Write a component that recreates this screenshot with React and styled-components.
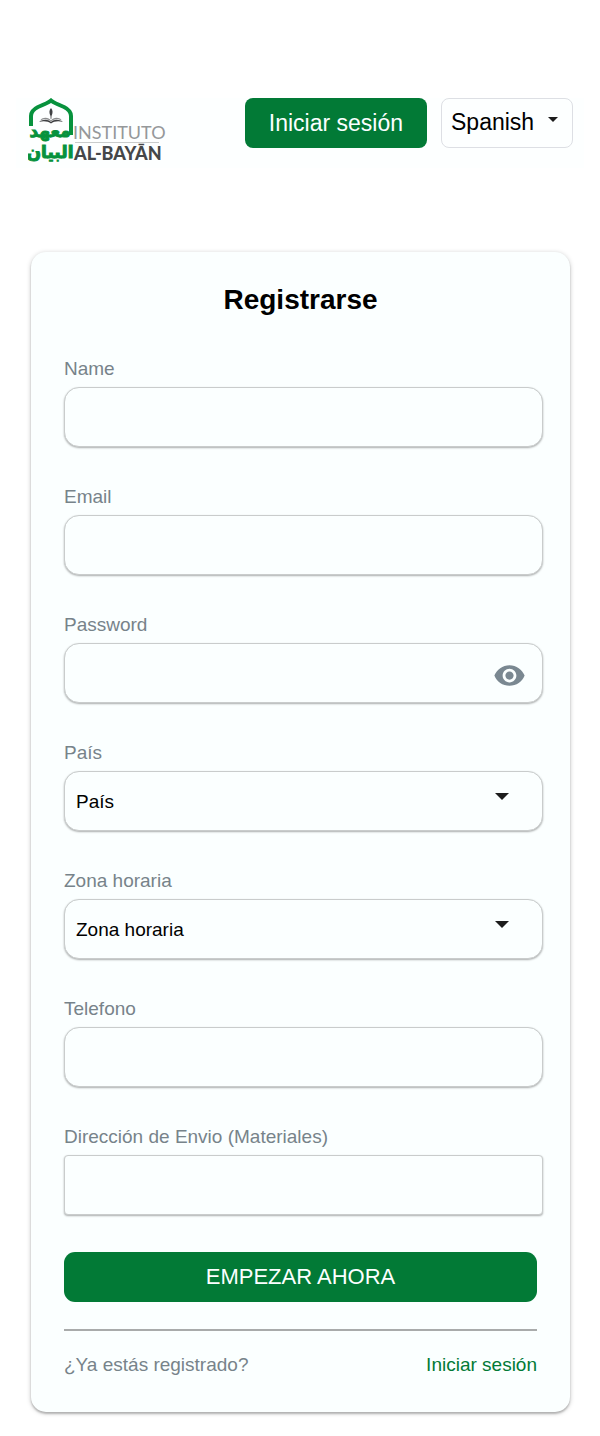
import React, { useState } from "react";
import styled, { createGlobalStyle } from "styled-components";
import { MdVisibility } from "react-icons/md";

const GREEN = "#027a36";
const GREY = "#77838a";
const TINT = "#fbffff";

const GlobalStyle = createGlobalStyle`
  *, *::before, *::after { box-sizing: border-box; }
  body {
    margin: 0;
    background: #fff;
    color: #000;
    font-family: "Liberation Sans", Arial, sans-serif;
    font-size: 19px;
    line-height: 24px;
  }
  button, input, select { font: inherit; color: inherit; margin: 0; }
`;

const Page = styled.div`
  margin: 0 16px;
  padding: 98px 0 24px;
`;

const Header = styled.header`
  display: flex;
  align-items: flex-start;
  justify-content: space-between;
  padding: 0 11px 0 12px;
  margin-bottom: 84px;
  background: #fdffff;
`;

const LogoLink = styled.a`
  display: block;
  text-decoration: none;
`;

const LogoDrawing = styled.svg`
  display: block;
  width: 140px;
  height: 70px;
`;

const Actions = styled.div`
  display: flex;
  gap: 14px;
`;

const LoginButton = styled.button`
  height: 50px;
  padding: 0 24px;
  border: 0;
  border-radius: 8px;
  background: ${GREEN};
  color: ${TINT};
  font-size: 23px;
  white-space: nowrap;
  cursor: pointer;
`;

const SelectWrap = styled.div`
  position: relative;
`;

const Caret = styled.svg`
  position: absolute;
  top: ${(p) => p.$top}px;
  right: ${(p) => p.$right}px;
  width: ${(p) => p.$size}px;
  height: 7px;
  fill: #1c1c1c;
  pointer-events: none;
`;

const LanguageSelect = styled.select`
  appearance: none;
  display: block;
  width: 132px;
  height: 50px;
  padding: 0 9px 2px;
  border: 1px solid #dddfe4;
  border-radius: 8px;
  background: #fdffff;
  font-size: 23px;
`;

const Card = styled.main`
  margin: 0 14px 0 15px;
  padding: 32px 33px 35px;
  border-radius: 15px;
  background: ${TINT};
  box-shadow: 0 1px 5px rgba(0, 0, 0, 0.22), 0 2px 2px rgba(0, 0, 0, 0.2);
`;

const Title = styled.h1`
  margin: 0 0 41px;
  font-size: 28px;
  line-height: 32px;
  font-weight: 700;
  text-align: center;
`;

const Form = styled.form`
  display: flex;
  flex-direction: column;
`;

const Fields = styled.div`
  display: flex;
  flex-direction: column;
  gap: 38px;
  margin: 0 -6px 37px 0;
`;

const Field = styled.div`
  display: flex;
  flex-direction: column;
  gap: 6px;
`;

const Label = styled.label`
  color: ${GREY};
`;

const Control = styled.input`
  appearance: none;
  display: block;
  width: 100%;
  height: 60px;
  padding: 2px 11px 0;
  border: 1px solid #c9cccc;
  border-radius: ${(p) => (p.$square ? 4 : 15)}px;
  background: ${TINT};
  box-shadow: 0 1px 2px rgba(0, 0, 0, 0.32);
`;

const EyeButton = styled.button`
  position: absolute;
  top: 16px;
  right: 17px;
  display: flex;
  padding: 0;
  border: 0;
  background: none;
  color: #7a8891;
  font-size: 33px;
  cursor: pointer;
`;

const SubmitButton = styled.button`
  height: 50px;
  border: 0;
  border-radius: 11px;
  background: ${GREEN};
  color: ${TINT};
  font-size: 22px;
  cursor: pointer;
`;

const Divider = styled.hr`
  width: 100%;
  height: 2px;
  margin: 27px 0 22px;
  border: 0;
  background: #a9abab;
`;

const CardFooter = styled.div`
  display: flex;
  justify-content: space-between;
  color: ${GREY};
`;

const FooterLink = styled.a`
  color: ${GREEN};
  text-decoration: none;
`;

function Logo() {
  return (
    <LogoDrawing viewBox="0 0 140 70" role="img" aria-label="Instituto Al-Bayān">
      <g fill="none" stroke="#07923d" strokeWidth="4">
        <path d="M3 28V18C3 13 6 11 10 9C15 7 20 5 23 2.500C26 5 31 7 36 9C40 11 43 13 43 18V37" />
      </g>
      <g fill="#3f4143">
        <path d="M23 10C25 12 25 15 23.500 18L23.300 21H22.700L22.500 18C21 15 21 12 23 10Z" />
        <path d="M11 24C15 21 20 21 23 24C26 21 31 21 35 24C31 22.700 26 23 23 25.500C20 23 15 22.700 11 24Z" />
        <path d="M14 20.500C18 19 21 20 23 22.500C25 20 28 19 32 20.500L34 22.500C29 20.500 26 21 23 23.700C20 21 17 20.500 12 22.500Z" opacity=".6" />
      </g>
      <g
        fill="#07923d"
        stroke="#07923d"
        strokeWidth="1"
        fontFamily="'DejaVu Sans', sans-serif"
        fontWeight="700"
        textAnchor="middle"
        direction="rtl"
      >
        <text x="22" y="39" fontSize="17">معهد</text>
        <text x="22" y="60" fontSize="17">البيان</text>
      </g>
      <path d="M47 44.500H131" stroke="#c9cccc" />
      <g fontFamily="Lato, sans-serif">
        <text x="45" y="41" fontSize="18" fontWeight="400" fill="#95989a">INSTITUTO</text>
        <text x="46" y="62" fontSize="18" fontWeight="900" fill="#454749">AL-BAYĀN</text>
      </g>
    </LogoDrawing>
  );
}

function TextField({ id, label, ...rest }) {
  return (
    <Field>
      <Label htmlFor={id}>{label}</Label>
      <Control id={id} name={id} {...rest} />
    </Field>
  );
}

function PasswordField() {
  const [visible, setVisible] = useState(false);
  return (
    <Field>
      <Label htmlFor="password">Password</Label>
      <SelectWrap>
        <Control id="password" name="password" type={visible ? "text" : "password"} />
        <EyeButton
          type="button"
          aria-label="Mostrar contraseña"
          onClick={() => setVisible(!visible)}
        >
          <MdVisibility />
        </EyeButton>
      </SelectWrap>
    </Field>
  );
}

function SelectField({ id, label }) {
  return (
    <Field>
      <Label htmlFor={id}>{label}</Label>
      <SelectWrap>
        <Control as="select" id={id} name={id}>
          <option>{label}</option>
        </Control>
        <Caret $top={22} $right={34} $size={14} viewBox="0 0 14 7" aria-hidden="true">
          <path d="M0 0H14L7 7Z" />
        </Caret>
      </SelectWrap>
    </Field>
  );
}

export default function App() {
  return (
    <>
      <GlobalStyle />
      <Page>
        <Header>
          <LogoLink href="#inicio">
            <Logo />
          </LogoLink>
          <Actions>
            <LoginButton type="button">Iniciar sesión</LoginButton>
            <SelectWrap>
              <LanguageSelect aria-label="Idioma">
                <option>Spanish</option>
              </LanguageSelect>
              <Caret $top={19} $right={15} $size={10} viewBox="0 0 10 7" aria-hidden="true">
                <path d="M0 0H10L5 5Z" />
              </Caret>
            </SelectWrap>
          </Actions>
        </Header>
        <Card>
          <Title>Registrarse</Title>
          <Form onSubmit={(e) => e.preventDefault()}>
            <Fields>
              <TextField id="name" label="Name" type="text" />
              <TextField id="email" label="Email" type="email" />
              <PasswordField />
              <SelectField id="pais" label="País" />
              <SelectField id="zona" label="Zona horaria" />
              <TextField id="telefono" label="Telefono" type="tel" />
              <TextField id="direccion" label="Dirección de Envio (Materiales)" type="text" $square />
            </Fields>
            <SubmitButton type="submit">EMPEZAR AHORA</SubmitButton>
          </Form>
          <Divider />
          <CardFooter>
            <span>¿Ya estás registrado?</span>
            <FooterLink href="#login">Iniciar sesión</FooterLink>
          </CardFooter>
        </Card>
      </Page>
    </>
  );
}
